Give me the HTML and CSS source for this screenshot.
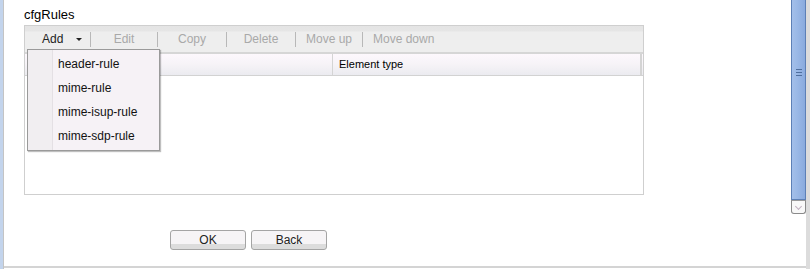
FILE: index.html
```html
<!DOCTYPE html>
<html>
<head>
<meta charset="utf-8">
<link rel="stylesheet" href="styles.css">
</head>
<body>
<div class="window">
  <div class="left-strip"></div>
  <div class="content">
    <div class="main">
      <div class="title">cfgRules</div>
      <div class="panel">
        <div class="toolbar">
          <div class="tb-btn tb-add">Add <span class="caret"></span></div>
          <div class="tb-sep"></div>
          <div class="tb-btn tb-edit disabled">Edit</div>
          <div class="tb-sep"></div>
          <div class="tb-btn tb-copy disabled">Copy</div>
          <div class="tb-sep"></div>
          <div class="tb-btn tb-delete disabled">Delete</div>
          <div class="tb-sep"></div>
          <div class="tb-btn tb-moveup disabled">Move up</div>
          <div class="tb-sep"></div>
          <div class="tb-btn tb-movedown disabled">Move down</div>
        </div>
        <div class="grid-header">
          <div class="col col-name"></div>
          <div class="col col-type">Element type</div>
          <div class="col col-gutter"></div>
        </div>
        <div class="grid-body"></div>
        <div class="menu">
          <div class="menu-item">header-rule</div>
          <div class="menu-item">mime-rule</div>
          <div class="menu-item">mime-isup-rule</div>
          <div class="menu-item">mime-sdp-rule</div>
        </div>
      </div>
      <div class="actions">
        <button class="btn">OK</button>
        <button class="btn">Back</button>
      </div>
    </div>
    <div class="vscroll">
      <div class="thumb"><span class="grip"></span></div>
      <div class="arrow-down"></div>
    </div>
  </div>
  <div class="right-gutter"></div>
</div>
</body>
</html>
```
FILE: styles.css
```css
html, body {
  margin: 0;
  padding: 0;
  background: #fff;
}
body {
  width: 810px;
  height: 269px;
  overflow: hidden;
  font-family: "Liberation Sans", Arial, sans-serif;
  color: #000;
}
.window {
  display: flex;
  height: 269px;
}
.left-strip {
  width: 3px;
  background: #c3d4ec;
  border-right: 1px solid #c4c4c4;
}
.content {
  flex: 1;
  display: flex;
  height: 266px;
  border-bottom: 2px solid #d4d4d4;
}
.main {
  flex: 1;
  padding-left: 20px;
}
.title {
  margin-top: 7px;
  font-size: 13px;
  line-height: 15px;
  height: 15px;
}
.panel {
  position: relative;
  margin-top: 3px;
  width: 618px;
  height: 168px;
  border: 1px solid #cfcfcf;
  display: flex;
  flex-direction: column;
}
.toolbar {
  display: flex;
  align-items: center;
  height: 26px;
  background: linear-gradient(to bottom, #e4e4e4 0, #e6e6e6 5px, #eeeeee 6px, #eeeeee 100%);
  border-bottom: 2px solid #d6d6d6;
  font-size: 12px;
}
.tb-btn {
  height: 26px;
  line-height: 26px;
  text-align: center;
  white-space: nowrap;
}
.tb-btn.disabled {
  color: #a9a9a9;
}
.tb-add {
  width: 48px;
  padding-left: 17px;
  text-align: left;
  color: #222;
}
.caret {
  display: inline-block;
  width: 0;
  height: 0;
  margin-left: 9px;
  vertical-align: middle;
  border-left: 3px solid transparent;
  border-right: 3px solid transparent;
  border-top: 3px solid #222;
}
.tb-edit { width: 66px; }
.tb-copy { width: 68px; }
.tb-delete { width: 68px; }
.tb-moveup { width: 66px; }
.tb-movedown { padding: 0 10px; }
.tb-sep {
  width: 1px;
  height: 15px;
  background: #b8b8b8;
}
.grid-header {
  display: flex;
  height: 21px;
  background: linear-gradient(to bottom, #fdf8fd 0, #f6f3f7 50%, #ebebf0 100%);
  border-bottom: 1px solid #d2d2d2;
  font-size: 11px;
}
.col {
  line-height: 21px;
}
.col-name {
  width: 307px;
  border-right: 1px solid #d4d4d4;
}
.col-type {
  flex: 1;
  padding-left: 6px;
  border-right: 2px solid #d4d4d4;
}
.col-gutter {
  width: 1px;
}
.grid-body {
  flex: 1;
  background: #fff;
}
.menu {
  position: absolute;
  left: 2px;
  top: 23px;
  width: 131px;
  padding: 2px 0;
  background: linear-gradient(to right, #f1eef1 0, #f1eef1 24px, #e4e0e4 24px, #e4e0e4 25px, #f6f2f6 25px);
  border: 1px solid #9a9a9a;
  box-shadow: 1px 1px 1px rgba(0, 0, 0, 0.25);
  font-size: 12px;
}
.menu-item {
  height: 24px;
  line-height: 24px;
  padding-left: 30px;
  color: #111;
}
.actions {
  display: flex;
  gap: 5px;
  margin-top: 35px;
  margin-left: 146px;
}
.btn {
  width: 76px;
  height: 20px;
  padding: 0;
  margin: 0;
  font-family: "Liberation Sans", Arial, sans-serif;
  font-size: 12px;
  line-height: 17px;
  color: #222;
  border: 1px solid #a4a4a4;
  border-radius: 3px;
  background: linear-gradient(to bottom, #f6f4f6 0, #f6f4f6 70%, #dcdcdc 70%, #dcdcdc 100%);
}
.vscroll {
  width: 15px;
  display: flex;
  flex-direction: column;
}
.thumb {
  height: 200px;
  box-sizing: border-box;
  border: 1px solid #5d80b6;
  border-top: 0;
  background: linear-gradient(to right, #a3bfe9 0, #9ab8e6 40%, #8aabde 100%);
  position: relative;
}
.grip {
  position: absolute;
  left: 4px;
  top: 69px;
  width: 6px;
  height: 5px;
  border-top: 1px solid #4f6f9e;
  border-bottom: 1px solid #4f6f9e;
}
.grip::after {
  content: "";
  position: absolute;
  left: 0;
  top: 2px;
  width: 6px;
  height: 1px;
  background: #4f6f9e;
}
.arrow-down {
  height: 14px;
  box-sizing: border-box;
  border: 1px solid #8a8a8a;
  border-top: 1px solid #9a9a9a;
  border-radius: 0 0 3px 3px;
  background: #f8f8f8;
  position: relative;
}
.arrow-down::after {
  content: "";
  position: absolute;
  left: 4px;
  top: 3px;
  width: 4px;
  height: 4px;
  border-right: 1px solid #c0b0c0;
  border-bottom: 1px solid #c0b0c0;
  transform: rotate(45deg);
}
.right-gutter {
  width: 4px;
  background: #dcdcdc;
}
```
